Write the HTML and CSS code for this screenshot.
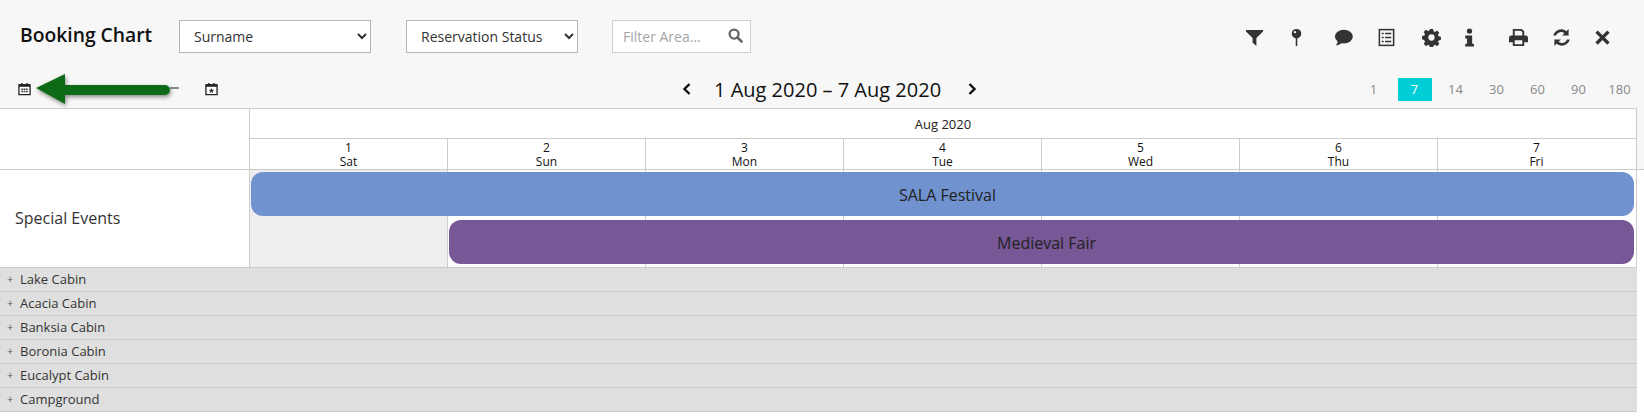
FILE: index.html
```html
<!DOCTYPE html>
<html lang="en">
<head>
    <meta charset="UTF-8">
    <meta name="viewport" content="width=device-width, initial-scale=1.0">
    <title>Booking Chart</title>
    <link rel="stylesheet" href="styles.css">
</head>
<body>
    <div class="top">
        <div class="toolbar">
            <h1 class="title">Booking Chart</h1>
            <select class="field field-name">
                <option>Surname</option>
            </select>
            <select class="field field-status">
                <option>Reservation Status</option>
            </select>
            <div class="search">
                <span class="search-text">Filter Area...</span>
                <svg class="search-icon" viewBox="0 0 16 16"><circle cx="6.5" cy="6.5" r="4.8" fill="none" stroke="#666" stroke-width="2.4"/><path d="M10 10l4.400 4.400" stroke="#666" stroke-width="2.800" stroke-linecap="round"/></svg>
            </div>
            <div class="tools">
                <svg class="tool tool-filter" viewBox="0 0 20 20"><path d="M1 2h18v1.600l-7 7V19l-4-3.400v-5l-7-7z"/></svg>
                <svg class="tool tool-pin" viewBox="0 0 20 20"><circle cx="10" cy="6" r="5"/><rect x="9.200" y="10" width="1.600" height="9"/><circle cx="8.400" cy="4.400" r="1.200" fill="#f7f7f7"/></svg>
                <svg class="tool tool-comment" viewBox="0 0 20 20"><ellipse cx="10.400" cy="9" rx="9.400" ry="7.200"/><path d="M4 13.500C4 16 3 17.400 1.500 18.200c3 0 5.500-1.200 7-3z"/></svg>
                <svg class="tool tool-tasks" viewBox="0 0 20 20"><rect x="2.500" y="1.700" width="15" height="16.600" fill="none" stroke="#333" stroke-width="1.600"/><path d="M5 5h2v1.500H5zM8.500 5h6.500v1.500H8.500zM5 9.200h2v1.500H5zM8.500 9.200h6.500v1.500H8.500zM5 13.400h2v1.500H5zM8.500 13.400h6.500v1.500H8.500z"/></svg>
                <svg class="tool tool-cog" viewBox="0 0 20 20"><path fill-rule="evenodd" d="M8.300 1h3.400l.5 2.500 1.500.6 2.100-1.400 2.400 2.400-1.400 2.100.6 1.500 2.500.5v3.400l-2.500.5-.6 1.500 1.400 2.100-2.400 2.400-2.100-1.400-1.500.6-.5 2.500H8.300l-.5-2.500-1.500-.6-2.100 1.400-2.400-2.400 1.400-2.100-.6-1.500L0 11.700V8.300l2.500-.5.600-1.500-1.400-2.100 2.400-2.400 2.100 1.400 1.500-.6zM10 6.700a3.300 3.300 0 1 0 0 6.600 3.300 3.300 0 0 0 0-6.600z"/></svg>
                <svg class="tool tool-info" viewBox="0 0 20 20"><circle cx="10" cy="3.200" r="2.800"/><path d="M5.500 8h7.300v8.500h1.900v3H5.500v-3h1.900V11H5.500z"/></svg>
                <svg class="tool tool-print" viewBox="0 0 20 20"><path fill-rule="evenodd" d="M4 1h9.500L16 3.500V8h1.500A2.500 2.500 0 0 1 20 10.500V15h-4v4H4v-4H0v-4.500A2.500 2.500 0 0 1 2.500 8H4zM6 3v5h8V4.500L12.700 3zM6 13v4h8v-4z"/></svg>
                <svg class="tool tool-refresh" viewBox="0 0 20 20"><path d="M17.500 1v7h-7l2.600-2.600A5.800 5.800 0 0 0 4.200 8H1.300a8.700 8.700 0 0 1 13.900-4.700zM2.500 19v-7h7l-2.600 2.600a5.800 5.800 0 0 0 8.900-2.600h2.900a8.700 8.700 0 0 1-13.900 4.700z"/></svg>
                <svg class="tool tool-close" viewBox="0 0 20 20"><path d="M5 2.500l5 5 5-5 2.500 2.500-5 5 5 5-2.500 2.500-5-5-5 5L2.500 15l5-5-5-5z"/></svg>
            </div>
        </div>

        <div class="datebar">
            <div class="date-pick">
                <svg class="cal" viewBox="0 0 14 14"><path d="M1 2.500h12v10.500H1z" fill="#fff" stroke="#222" stroke-width="1.400"/><path d="M1 2h12v2.500H1zM3.500.5h1.500v2H3.500zM9 .5h1.500v2H9z" fill="#222"/><path d="M3.500 6.500h2V8h-2zM6 6.500h2V8H6zM8.500 6.500h2V8h-2zM3.500 9h2v1.500h-2zM6 9h2v1.500H6zM8.500 9h2v1.500h-2z" fill="#444"/></svg>
                <span class="date-dash"></span>
                <svg class="cal" viewBox="0 0 14 14"><path d="M1 2.500h12v10.500H1z" fill="#fff" stroke="#222" stroke-width="1.400"/><path d="M1 2h12v2.500H1zM3.500.5h1.500v2H3.500zM9 .5h1.500v2H9z" fill="#222"/><path d="M7 5.800l.9 1.900 2 .2-1.500 1.400.4 2L7 10.300l-1.800 1 .4-2L4.100 7.900l2-.2z" fill="#333"/></svg>
            </div>
            <div class="date-nav">
                <svg class="chev" viewBox="0 0 10 14"><path d="M7.500 2L2.500 7l5 5" fill="none" stroke="#111" stroke-width="2.400"/></svg>
                <span class="date-range">1 Aug 2020 – 7 Aug 2020</span>
                <svg class="chev" viewBox="0 0 10 14"><path d="M2.500 2l5 5-5 5" fill="none" stroke="#111" stroke-width="2.400"/></svg>
            </div>
            <div class="ranges">
                <a class="range">1</a>
                <a class="range active">7</a>
                <a class="range">14</a>
                <a class="range">30</a>
                <a class="range">60</a>
                <a class="range">90</a>
                <a class="range">180</a>
            </div>
        </div>

        <div class="chart-head">
            <div class="corner"></div>
            <div class="head-days">
                <div class="month">Aug 2020</div>
                <div class="days">
                    <div class="day">1<br>Sat</div>
                    <div class="day">2<br>Sun</div>
                    <div class="day">3<br>Mon</div>
                    <div class="day">4<br>Tue</div>
                    <div class="day">5<br>Wed</div>
                    <div class="day">6<br>Thu</div>
                    <div class="day">7<br>Fri</div>
                </div>
            </div>
        </div>
    </div>

    <div class="events-row">
        <div class="events-label">Special Events</div>
        <div class="events">
            <div class="event-cols">
                <div class="event-col shaded"></div>
                <div class="event-col"></div>
                <div class="event-col"></div>
                <div class="event-col"></div>
                <div class="event-col"></div>
                <div class="event-col"></div>
                <div class="event-col"></div>
            </div>
            <div class="event event-sala">SALA Festival</div>
            <div class="event event-fair">Medieval Fair</div>
        </div>
    </div>

    <div class="groups">
        <div class="group"><span class="plus">+</span>Lake Cabin</div>
        <div class="group"><span class="plus">+</span>Acacia Cabin</div>
        <div class="group"><span class="plus">+</span>Banksia Cabin</div>
        <div class="group"><span class="plus">+</span>Boronia Cabin</div>
        <div class="group"><span class="plus">+</span>Eucalypt Cabin</div>
        <div class="group"><span class="plus">+</span>Campground</div>
    </div>

    <!-- annotation arrow -->
    <svg class="arrow" width="150" height="44" viewBox="0 0 150 44">
        <defs>
            <filter id="arrow-shadow" x="-10%" y="-20%" width="120%" height="150%">
                <feDropShadow dx="1" dy="2" stdDeviation="2" flood-color="#000" flood-opacity="0.45"/>
            </filter>
        </defs>
        <path d="M2 16L31 2v11h100a5 5 0 0 1 0 10H31v9z" fill="#0d6b18" filter="url(#arrow-shadow)"/>
    </svg>
</body>
</html>
```

FILE: styles.css
```css
* {
    box-sizing: border-box;
}
body {
    margin: 0;
    background: #fff;
    color: #333;
    font-family: "Open Sans", Arial, sans-serif;
    position: relative;
}
.top {
    height: 170px;
    padding-top: 20px;
    background: #f7f7f7;
    border-bottom: 1px solid #ccc;
}
.toolbar {
    display: flex;
    align-items: center;
    height: 33px;
    padding-left: 20px;
}
.title {
    width: 132px;
    margin: 0 27px 4px 0;
    font-size: 19.3px;
    font-weight: 600;
    color: #111;
    white-space: nowrap;
}
.field {
    height: 33px;
    margin-right: 35px;
    padding-left: 10px;
    border: 1px solid #b5b5b5;
    border-radius: 0;
    background-color: #fff;
    font-family: inherit;
    font-size: 14px;
    color: #333;
}
.field-name {
    width: 192px;
}
.field-status {
    width: 172px;
    margin-right: 34px;
}
.search {
    display: flex;
    align-items: center;
    justify-content: space-between;
    width: 139px;
    height: 33px;
    padding: 0 7px 0 10px;
    background: #fff;
    border: 1px solid #d0d0d0;
}
.search-text {
    font-size: 14px;
    color: #a5a5a5;
}
.search-icon {
    width: 15px;
    height: 15px;
    margin-bottom: 2px;
}
.tools {
    display: flex;
    align-items: center;
    width: 399px;
    margin-left: auto;
    padding-top: 2px;
}
.tool {
    width: 19px;
    height: 19px;
    fill: #333;
    flex: none;
}
.tool-pin { margin-left: 23px; }
.tool-comment { margin-left: 28px; }
.tool-tasks { margin-left: 24px; }
.tool-cog { margin-left: 26px; }
.tool-info { margin-left: 19px; }
.tool-print { margin-left: 30px; }
.tool-refresh { margin-left: 24px; }
.tool-close { margin-left: 22px; }
.datebar {
    display: flex;
    align-items: center;
    height: 30px;
    margin-top: 21px;
    padding-right: 4px;
}
.date-pick {
    display: flex;
    align-items: center;
    width: 682px;
    padding-left: 18px;
}
.cal {
    width: 13px;
    height: 14px;
}
.date-dash {
    width: 9px;
    height: 2px;
    margin: 0 26px 2px 139px;
    background: #888;
}
.date-nav {
    display: flex;
    align-items: center;
    gap: 22px;
}
.date-nav .chev:last-child {
    margin-left: 4px;
}
.chev {
    width: 10px;
    height: 14px;
}
.date-range {
    font-size: 20px;
    color: #111;
}
.ranges {
    display: flex;
    align-items: center;
    margin-left: auto;
}
.range {
    width: 41px;
    text-align: center;
    font-size: 13px;
    line-height: 23px;
    color: #888;
}
.range.active {
    width: 34px;
    margin: 0 3.5px;
    background: #00ced6;
    color: #fff;
}
.chart-head {
    display: flex;
    width: 1637px;
    height: 61px;
    margin-top: 4px;
    background: #fff;
    border-top: 1px solid #ccc;
    border-right: 1px solid #ccc;
}
.corner {
    width: 250px;
    border-right: 1px solid #ccc;
}
.head-days {
    flex: 1;
}
.month {
    height: 30px;
    line-height: 30px;
    text-align: center;
    font-size: 13px;
    color: #222;
    border-bottom: 1px solid #ccc;
}
.days, .event-cols {
    display: grid;
    grid-template-columns: 197px repeat(5, 198px) 198px;
}
.day {
    height: 30px;
    padding-top: 2px;
    text-align: center;
    font-size: 12px;
    line-height: 14px;
    color: #111;
    border-left: 1px solid #ccc;
}
.day:first-child {
    border-left: 0;
}
.events-row {
    display: flex;
    width: 1637px;
    height: 98px;
    border-right: 1px solid #ccc;
    border-bottom: 1px solid #ccc;
}
.events-label {
    width: 250px;
    padding-left: 15px;
    line-height: 97px;
    font-size: 16px;
    color: #333;
    border-right: 1px solid #ccc;
}
.events {
    position: relative;
    flex: 1;
    padding: 2px 2px 0 1px;
}
.event-cols {
    position: absolute;
    inset: 0;
}
.event-col {
    border-left: 1px solid #ccc;
}
.event-col:first-child {
    border-left: 0;
}
.event-col.shaded {
    background: #eee;
}
.event {
    position: relative;
    height: 44px;
    padding-left: 10px;
    line-height: 46px;
    border-radius: 12px;
    text-align: center;
    font-size: 16px;
    color: #222;
}
.event-sala {
    background: #7092cf;
}
.event-fair {
    margin: 4px 0 0 198px;
    background: #775796;
}
.groups {
    width: 1637px;
}
.group {
    display: flex;
    align-items: center;
    height: 24px;
    padding-bottom: 2px;
    background: #dfdfdf;
    border-bottom: 1px solid #cbcbcb;
    font-size: 13px;
    color: #333;
}
.plus {
    width: 20px;
    padding-left: 7px;
    font-size: 11px;
    color: #555;
}
.arrow {
    position: absolute;
    left: 34px;
    top: 72px;
}
```
